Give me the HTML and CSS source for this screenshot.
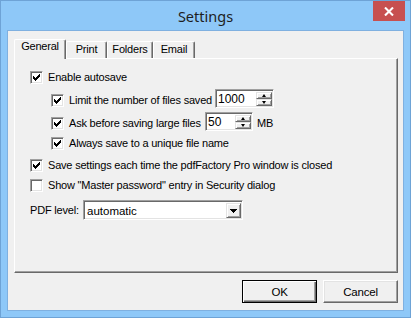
FILE: index.html
```html
<!DOCTYPE html>
<html>
<head>
<meta charset="utf-8">
<link rel="stylesheet" href="styles.css">
</head>
<body>
<div class="window">
  <div class="titlebar">
    <span></span>
    <div class="title">Settings</div>
    <div class="close"><svg width="10" height="9" viewBox="0 0 10 9"><path d="M1 0.5 L9 8.5 M9 0.5 L1 8.5" stroke="#fff" stroke-width="2.1"/></svg></div>
  </div>
  <div class="client">
    <div class="tabs">
      <div class="tab active w-general">General</div>
      <div class="tab w-print">Print</div>
      <div class="tab w-folders">Folders</div>
      <div class="tab w-email">Email</div>
    </div>
    <div class="panel">
      <div class="row r-enable">
        <span class="cb"><svg width="13" height="13" viewBox="0 0 13 13" shape-rendering="crispEdges"><rect x="3" y="5" width="1" height="3"/><rect x="4" y="6" width="1" height="3"/><rect x="5" y="7" width="1" height="3"/><rect x="6" y="6" width="1" height="3"/><rect x="7" y="5" width="1" height="3"/><rect x="8" y="4" width="1" height="3"/><rect x="9" y="3" width="1" height="3"/></svg></span>
        <span class="lbl">Enable autosave</span>
      </div>
      <div class="row sub r-limit">
        <span class="cb"><svg width="13" height="13" viewBox="0 0 13 13" shape-rendering="crispEdges"><rect x="3" y="5" width="1" height="3"/><rect x="4" y="6" width="1" height="3"/><rect x="5" y="7" width="1" height="3"/><rect x="6" y="6" width="1" height="3"/><rect x="7" y="5" width="1" height="3"/><rect x="8" y="4" width="1" height="3"/><rect x="9" y="3" width="1" height="3"/></svg></span>
        <span class="lbl l-limit">Limit the number of files saved</span>
        <div class="spin s-limit">
          <span class="val">1000</span>
          <div class="arrows">
            <span class="arr up"></span>
            <span class="arr down"></span>
          </div>
        </div>
      </div>
      <div class="row sub r-ask">
        <span class="cb"><svg width="13" height="13" viewBox="0 0 13 13" shape-rendering="crispEdges"><rect x="3" y="5" width="1" height="3"/><rect x="4" y="6" width="1" height="3"/><rect x="5" y="7" width="1" height="3"/><rect x="6" y="6" width="1" height="3"/><rect x="7" y="5" width="1" height="3"/><rect x="8" y="4" width="1" height="3"/><rect x="9" y="3" width="1" height="3"/></svg></span>
        <span class="lbl l-ask">Ask before saving large files</span>
        <div class="spin s-ask">
          <span class="val">50</span>
          <div class="arrows">
            <span class="arr up"></span>
            <span class="arr down"></span>
          </div>
        </div>
        <span class="lbl unit">MB</span>
      </div>
      <div class="row sub r-always">
        <span class="cb"><svg width="13" height="13" viewBox="0 0 13 13" shape-rendering="crispEdges"><rect x="3" y="5" width="1" height="3"/><rect x="4" y="6" width="1" height="3"/><rect x="5" y="7" width="1" height="3"/><rect x="6" y="6" width="1" height="3"/><rect x="7" y="5" width="1" height="3"/><rect x="8" y="4" width="1" height="3"/><rect x="9" y="3" width="1" height="3"/></svg></span>
        <span class="lbl">Always save to a unique file name</span>
      </div>
      <div class="row r-save">
        <span class="cb"><svg width="13" height="13" viewBox="0 0 13 13" shape-rendering="crispEdges"><rect x="3" y="5" width="1" height="3"/><rect x="4" y="6" width="1" height="3"/><rect x="5" y="7" width="1" height="3"/><rect x="6" y="6" width="1" height="3"/><rect x="7" y="5" width="1" height="3"/><rect x="8" y="4" width="1" height="3"/><rect x="9" y="3" width="1" height="3"/></svg></span>
        <span class="lbl">Save settings each time the pdfFactory Pro window is closed</span>
      </div>
      <div class="row r-show">
        <span class="cb"></span>
        <span class="lbl">Show "Master password" entry in Security dialog</span>
      </div>
      <div class="row r-pdf">
        <span class="lbl l-pdf">PDF level:</span>
        <div class="combo">
          <span class="val">automatic</span>
          <span class="drop"><svg width="7" height="4" viewBox="0 0 7 4" shape-rendering="crispEdges"><path d="M0 0 H7 L3.5 4 Z" fill="#000"/></svg></span>
        </div>
      </div>
    </div>
    <div class="buttons">
      <div class="btn default">OK</div>
      <div class="btn">Cancel</div>
    </div>
  </div>
</div>
</body>
</html>
```

FILE: styles.css
```css
html, body {
  margin: 0;
  padding: 0;
  background: #8ec8f8;
}

.window {
  width: 411px;
  height: 318px;
  box-sizing: border-box;
  border: 1px solid #6ea3d6;
  background: #8ec8f8;
  font-family: "Liberation Sans", Arial, sans-serif;
  font-size: 11px;
  letter-spacing: -0.2px;
  color: #000;
}

.titlebar {
  height: 29px;
  display: grid;
  grid-template-columns: 1fr auto 1fr;
}

.title {
  font-family: "Noto Sans", "Open Sans", sans-serif;
  font-size: 14.5px;
  letter-spacing: 0;
  line-height: 29px;
  color: #1e1e1e;
  padding-top: 1px;
}

.close {
  justify-self: end;
  align-self: start;
  width: 32px;
  height: 20px;
  margin-right: 5px;
  background: #c75050;
  display: flex;
  align-items: center;
  justify-content: center;
}

.client {
  margin: 0 6px;
  height: 281px;
  box-sizing: border-box;
  border: 1px solid #7fb0e0;
  background: #f0f0f0;
  padding: 8px 5px 0 6px;
}

.tabs {
  display: flex;
  align-items: flex-end;
  height: 19px;
}

.tab {
  box-sizing: border-box;
  height: 17px;
  background: #f0f0f0;
  border-left: 1px solid #fff;
  border-top: 1px solid #fff;
  border-right: 1px solid #696969;
  box-shadow: inset -1px 0 0 #a0a0a0;
  border-radius: 2px 2px 0 0;
  display: flex;
  justify-content: center;
  line-height: 13px;
  padding-top: 1px;
}

.tab.active {
  height: 20px;
  margin-bottom: -1px;
  position: relative;
  z-index: 1;
  padding-top: 0;
}

.w-general { width: 52px; }
.w-print { width: 41px; }
.w-folders { width: 46px; }
.w-email { width: 42px; }

.panel {
  box-sizing: border-box;
  width: 384px;
  height: 215px;
  border-left: 1px solid #fff;
  border-top: 1px solid #fff;
  border-right: 1px solid #696969;
  border-bottom: 1px solid #696969;
  box-shadow: inset -1px -1px 0 #a0a0a0;
  padding: 12px 0 0 15px;
  display: flex;
  flex-direction: column;
}

.row {
  display: flex;
  align-items: flex-start;
}

.row.sub { padding-left: 21px; }

.r-limit { margin-top: 5px; }
.r-ask { margin-top: 4px; }
.r-always { margin-top: 6px; }
.r-save { margin-top: 9px; }
.r-show { margin-top: 7px; }
.r-pdf { margin-top: 8px; }

.r-limit .cb, .r-limit .lbl,
.r-ask .cb, .r-ask .lbl { margin-top: 5px; }

.cb {
  box-sizing: border-box;
  width: 13px;
  height: 13px;
  flex: none;
  position: relative;
  background: #fff;
  border-top: 1px solid #a0a0a0;
  border-left: 1px solid #a0a0a0;
  border-right: 1px solid #fff;
  border-bottom: 1px solid #fff;
  box-shadow: inset 1px 1px 0 #696969, inset -1px -1px 0 #e3e3e3;
}

.cb svg {
  display: block;
  margin: -1px 0 0 -1px;
  fill: #000;
}

.lbl {
  line-height: 13px;
  white-space: nowrap;
  margin-left: 5px;
}

.l-limit { width: 146px; flex: none; }
.l-ask { width: 136px; flex: none; }
.unit { margin-left: 4px; }
.l-pdf { margin-left: 0; width: 53px; flex: none; margin-top: 4px; }

.spin, .combo {
  box-sizing: border-box;
  height: 19px;
  background: #fff;
  border-top: 1px solid #a0a0a0;
  border-left: 1px solid #a0a0a0;
  border-right: 1px solid #fff;
  border-bottom: 1px solid #fff;
  box-shadow: inset 1px 1px 0 #696969, inset -1px -1px 0 #e3e3e3;
  display: flex;
  align-items: stretch;
  padding: 2px 1px 1px 2px;
}

.s-limit { width: 59px; }
.s-ask { width: 48px; }

.val {
  flex: 1;
  line-height: 15px;
  font-size: 12px;
  letter-spacing: 0;
}

.arrows {
  width: 16px;
  display: flex;
  flex-direction: column;
}

.arr {
  flex: 1;
  box-sizing: border-box;
  background: #f0f0f0;
  border-left: 1px solid #e3e3e3;
  border-top: 1px solid #e3e3e3;
  border-right: 1px solid #696969;
  border-bottom: 1px solid #696969;
  box-shadow: inset 1px 1px 0 #fff, inset -1px -1px 0 #a0a0a0;
  position: relative;
  display: flex;
  align-items: center;
  justify-content: center;
}

.arr::after {
  content: "";
  width: 0;
  height: 0;
  border-left: 2.5px solid transparent;
  border-right: 2.5px solid transparent;
}

.arr.up::after { border-bottom: 3px solid #000; }
.arr.down::after { border-top: 3px solid #000; }

.combo {
  width: 160px;
  height: 20px;
  padding: 2px 1px 1px 2px;
}

.combo .val {
  font-size: 11.5px;
  line-height: 16px;
  padding-left: 1px;
}

.drop {
  width: 15px;
  box-sizing: border-box;
  background: #f0f0f0;
  border-left: 1px solid #e3e3e3;
  border-top: 1px solid #e3e3e3;
  border-right: 1px solid #696969;
  border-bottom: 1px solid #696969;
  box-shadow: inset 1px 1px 0 #fff, inset -1px -1px 0 #a0a0a0;
  display: flex;
  align-items: center;
  justify-content: center;
}

.drop svg { display: block; }

.buttons {
  display: flex;
  justify-content: flex-end;
  gap: 6px;
  margin-top: 7px;
}

.btn {
  box-sizing: border-box;
  width: 75px;
  height: 23px;
  background: #f0f0f0;
  border-left: 1px solid #fff;
  border-top: 1px solid #fff;
  border-right: 1px solid #696969;
  border-bottom: 1px solid #696969;
  box-shadow: inset -1px -1px 0 #a0a0a0, inset 1px 1px 0 #e3e3e3;
  display: flex;
  align-items: center;
  justify-content: center;
  font-size: 11.5px;
}

.btn.default {
  border: 1px solid #000;
  box-shadow: inset 1px 1px 0 #fff, inset -1px -1px 0 #696969, inset -2px -2px 0 #a0a0a0;
}
```
